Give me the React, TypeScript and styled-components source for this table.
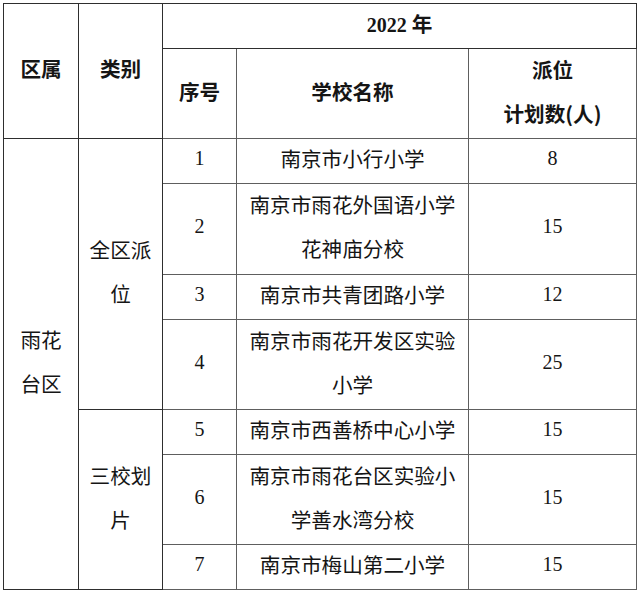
import type { ReactNode } from "react"
import { createGlobalStyle, styled } from "styled-components"

const Global = createGlobalStyle`
  html, body {
    margin: 0;
    padding: 0;
    background: #ffffff;
  }
`

const Page = styled.div`
  width: 640px;
  height: 592px;
  padding: 3px 0 0 3px;
  box-sizing: border-box;
  background: #ffffff;
`

const Table = styled.table`
  width: 633px;
  table-layout: fixed;
  border-collapse: collapse;
  color: #151515;
  font-family: "Noto Sans CJK SC", "Noto Sans", sans-serif;
  font-size: 20.6px;
`

const Row = styled.tr<{ $h: number }>`
  height: ${(p) => p.$h}px;
`

const Cell = styled.td<{ $soft?: boolean }>`
  border: 1px solid ${(p) => (p.$soft ? "#5e5e5e" : "#2e2e2e")};
  padding: 0 10px;
  text-align: center;
  vertical-align: middle;
  line-height: 44px;
  box-sizing: border-box;
`

/* glyphs sit a little above the cell centre in the source document */
const Text = styled.div`
  margin-top: -6px;
`

const HeadCell = styled(Cell)`
  font-weight: 700;
`

const SideCell = styled(Cell)`
  padding: 0 7px;
`

const Num = styled(Cell)`
  font-family: "Liberation Serif", "Times New Roman", serif;
  font-size: 20px;
`

const Year = styled.span`
  font-family: "Liberation Serif", serif;
  font-weight: 700;
  font-size: 20px;
  line-height: 1;
`

const YearChar = styled.span`
  font-family: "Noto Sans CJK SC", sans-serif;
  font-weight: 700;
  margin-left: 5px;
  line-height: 1;
`

const Name = styled(Cell)`
  padding: 0 11px;
`

type School = { no: number; name: string; plan: number; h: number }

const whole: School[] = [
  { no: 1, name: "南京市小行小学", plan: 8, h: 45 },
  { no: 2, name: "南京市雨花外国语小学花神庙分校", plan: 15, h: 91 },
  { no: 3, name: "南京市共青团路小学", plan: 12, h: 45 },
  { no: 4, name: "南京市雨花开发区实验小学", plan: 25, h: 90 },
]

const three: School[] = [
  { no: 5, name: "南京市西善桥中心小学", plan: 15, h: 45 },
  { no: 6, name: "南京市雨花台区实验小学善水湾分校", plan: 15, h: 90 },
  { no: 7, name: "南京市梅山第二小学", plan: 15, h: 45 },
]

function SchoolRow({ s, lead }: { s: School; lead?: ReactNode }) {
  return (
    <Row $h={s.h}>
      {lead}
      <Num $soft>
        <Text>{s.no}</Text>
      </Num>
      <Name $soft>
        <Text>{s.name}</Text>
      </Name>
      <Num $soft>
        <Text>{s.plan}</Text>
      </Num>
    </Row>
  )
}

function App() {
  return (
    <Page>
      <Global />
      <Table>
        <colgroup>
          <col style={{ width: 75 }} />
          <col style={{ width: 84 }} />
          <col style={{ width: 74 }} />
          <col style={{ width: 232 }} />
          <col style={{ width: 168 }} />
        </colgroup>
        <tbody>
          <Row $h={45}>
            <HeadCell rowSpan={2}>
              <Text>区属</Text>
            </HeadCell>
            <HeadCell rowSpan={2}>
              <Text>类别</Text>
            </HeadCell>
            <HeadCell colSpan={3}>
              <Text>
                <Year>2022</Year>
                <YearChar>年</YearChar>
              </Text>
            </HeadCell>
          </Row>
          <Row $h={90}>
            <HeadCell $soft>
              <Text>序号</Text>
            </HeadCell>
            <HeadCell $soft>
              <Text>学校名称</Text>
            </HeadCell>
            <HeadCell $soft>
              <Text>
                派位
                <br />
                计划数(人)
              </Text>
            </HeadCell>
          </Row>
          {whole.map((s, i) => (
            <SchoolRow
              key={s.no}
              s={s}
              lead={
                i === 0 && (
                  <>
                    <SideCell rowSpan={7}>
                      <Text>雨花台区</Text>
                    </SideCell>
                    <SideCell rowSpan={4}>
                      <Text>全区派位</Text>
                    </SideCell>
                  </>
                )
              }
            />
          ))}
          {three.map((s, i) => (
            <SchoolRow
              key={s.no}
              s={s}
              lead={
                i === 0 && (
                  <SideCell rowSpan={3}>
                    <Text>三校划片</Text>
                  </SideCell>
                )
              }
            />
          ))}
        </tbody>
      </Table>
    </Page>
  )
}

export default App
